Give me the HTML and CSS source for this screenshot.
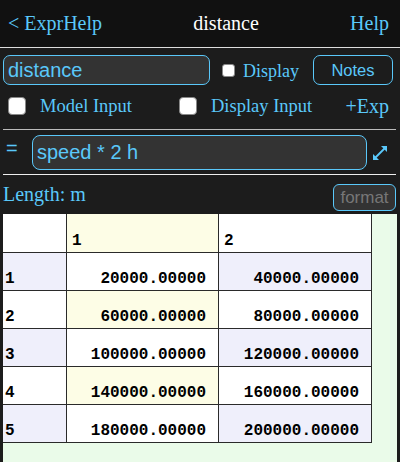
FILE: index.html
```html
<!DOCTYPE html>
<html>
<head>
<meta charset="utf-8">
<link rel="stylesheet" href="styles.css">
</head>
<body>
<header class="topbar">
  <span class="nav-link">&lt; ExprHelp</span>
  <span class="title">distance</span>
  <span class="nav-link">Help</span>
</header>
<div class="name-row">
  <div class="field name-field">distance</div>
  <span class="check check-sm"></span>
  <span class="display-label">Display</span>
  <div class="notes-btn">Notes</div>
</div>
<div class="opts-row">
  <div class="opt opt-model"><span class="check check-lg"></span><span>Model Input</span></div>
  <div class="opt"><span class="check check-lg"></span><span>Display Input</span></div>
  <span class="exp-link">+Exp</span>
</div>
<div class="divider"></div>
<div class="expr-row">
  <span class="eq">=</span>
  <div class="field expr-field">speed * 2 h</div>
  <svg class="expand" width="14" height="14" viewBox="0 0 14 14">
    <line x1="2.5" y1="11.5" x2="11.5" y2="2.5" stroke="#5ac8fa" stroke-width="1.8"/>
    <polygon points="14,0 14,6 8,0" fill="#5ac8fa"/>
    <polygon points="0,14 0,8 6,14" fill="#5ac8fa"/>
  </svg>
</div>
<div class="divider light"></div>
<div class="unit-row">
  <span class="unit-label">Length: m</span>
  <div class="format-btn">format</div>
</div>
<div class="grid-wrap">
  <table class="grid">
    <colgroup><col class="c0"><col class="c1"><col class="c2"></colgroup>
    <tr class="head"><th class="lbl"></th><th class="hl">1</th><th>2</th></tr>
    <tr class="odd"><th class="lbl">1</th><td>20000.00000</td><td>40000.00000</td></tr>
    <tr class="even"><th class="lbl">2</th><td>60000.00000</td><td>80000.00000</td></tr>
    <tr class="odd"><th class="lbl">3</th><td>100000.00000</td><td>120000.00000</td></tr>
    <tr class="even"><th class="lbl">4</th><td>140000.00000</td><td>160000.00000</td></tr>
    <tr class="odd"><th class="lbl">5</th><td>180000.00000</td><td>200000.00000</td></tr>
  </table>
</div>
</body>
</html>
```
FILE: styles.css
```css
* { box-sizing: border-box; }
html, body { margin: 0; }
body {
  width: 400px;
  height: 462px;
  overflow: hidden;
  background: #1c1c1c;
  color: #5ac8fa;
  font-family: "Liberation Serif", serif;
}
.topbar {
  height: 48px;
  background: #111;
  border-bottom: 1px solid #ddd;
  display: flex;
  justify-content: space-between;
  align-items: center;
  padding: 0 11px 0 8px;
  font-size: 20px;
}
.title { color: #fff; }
.name-row {
  display: flex;
  align-items: center;
  padding: 7px 7px 0 3px;
}
.field {
  border: 1px solid #5ac8fa;
  background: #333;
  font-family: "Liberation Sans", sans-serif;
  font-size: 20px;
  padding-left: 4px;
  display: flex;
  align-items: center;
}
.name-field { width: 207px; height: 30px; border-radius: 7px; }
.check {
  display: inline-block;
  background: #fff;
  border: 1px solid #888;
  flex: none;
}
.check-sm { width: 13px; height: 13px; border-radius: 3px; margin-left: 12px; }
.display-label { margin-left: 8px; font-size: 18px; margin-top: 2px; }
.notes-btn {
  margin-left: auto;
  width: 80px;
  height: 30px;
  border: 1px solid #5ac8fa;
  border-radius: 7px;
  font-family: "Liberation Sans", sans-serif;
  font-size: 16.5px;
  display: flex;
  align-items: center;
  justify-content: center;
}
.opts-row {
  display: flex;
  align-items: center;
  height: 30px;
  padding: 12px 11px 0 8px;
  font-size: 18.5px;
}
.opt { display: flex; align-items: center; }
.opt-model { width: 171px; }
.check-lg { width: 18px; height: 18px; border-radius: 4px; margin-right: 14px; }
.exp-link { margin-left: auto; font-size: 20px; }
.divider {
  height: 1px;
  background: #bbb;
  margin: 14px 4px 0 3px;
}
.divider.light { background: #eee; margin-top: 4px; }
.expr-row {
  display: flex;
  align-items: center;
  padding: 5px 0 0 3px;
}
.eq {
  width: 29px;
  padding-left: 3px;
  font-family: "Liberation Sans", sans-serif;
  font-size: 20px;
  align-self: flex-start;
  margin-top: 2px;
}
.expr-field { width: 335px; height: 35px; border-radius: 8px; }
.expand { margin-left: 6px; }
.unit-row {
  display: flex;
  align-items: flex-start;
  padding: 0 4px 0 3px;
}
.unit-label { margin-top: 8px; font-size: 20px; }
.format-btn {
  margin-left: auto;
  margin-top: 9px;
  width: 63px;
  height: 27px;
  border: 1px solid #5ac8fa;
  border-radius: 6px;
  background: #333;
  color: #777;
  font-family: "Liberation Sans", sans-serif;
  font-size: 17px;
  display: flex;
  align-items: center;
  justify-content: center;
}
.grid-wrap {
  margin: 3px 3px 0 3px;
  height: 260px;
  background: #eafbe9;
}
.grid {
  border-collapse: separate;
  border-spacing: 0;
  table-layout: fixed;
  width: 369px;
  font-family: "Liberation Mono", monospace;
  font-weight: bold;
  font-size: 16px;
  line-height: 16px;
  color: #000;
}
.c0 { width: 64px; }
.c1 { width: 152px; }
.c2 { width: 153px; }
.grid th, .grid td {
  background: #fff;
  border-right: 1px solid #2a2a2a;
  border-bottom: 1px solid #2a2a2a;
  vertical-align: bottom;
  padding: 0 12px 3px 0;
  text-align: right;
}
.grid th { text-align: left; padding-left: 5px; }
.grid th.lbl { padding-left: 2px; }
.grid tr { height: 38px; }
.grid tr.head { height: 39px; }
.grid tr.head th.hl { background: #fdfde6; }
.grid tr.odd th, .grid tr.odd td:nth-child(3) { background: #efeffb; }
.grid tr.even td:nth-child(2) { background: #fdfde6; }
```
